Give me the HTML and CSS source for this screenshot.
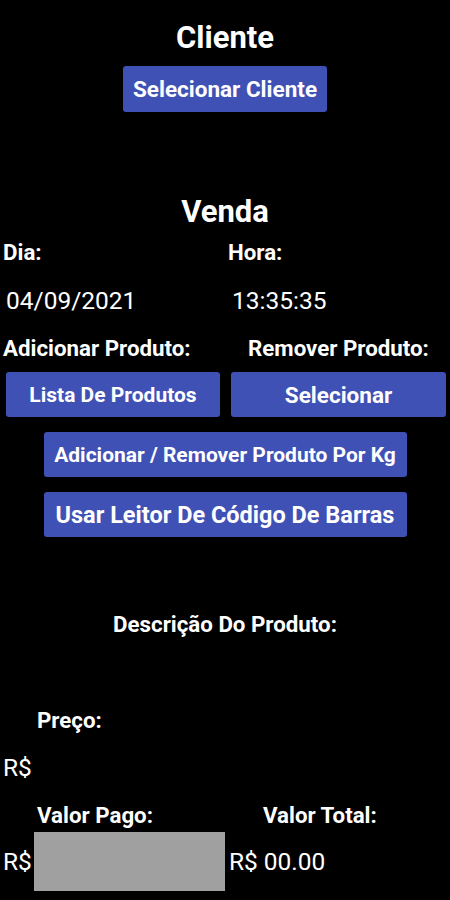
FILE: index.html
```html
<!DOCTYPE html>
<html lang="pt-BR">
<head>
  <meta charset="UTF-8" />
  <meta name="viewport" content="width=device-width, initial-scale=1" />
  <title>Venda</title>
  <link rel="stylesheet" href="styles.css">
</head>
<body>

  <section class="cliente">
    <h1 class="titulo">Cliente</h1>
    <button class="btn btn-cliente">Selecionar Cliente</button>
  </section>

  <section class="venda">
    <h1 class="titulo">Venda</h1>

    <div class="linha linha-data">
      <span class="rotulo">Dia:</span>
      <span class="rotulo">Hora:</span>
    </div>
    <div class="linha linha-valor">
      <span class="valor">04/09/2021</span>
      <span class="valor">13:35:35</span>
    </div>

    <div class="linha linha-produto">
      <span class="rotulo">Adicionar Produto:</span>
      <span class="rotulo">Remover Produto:</span>
    </div>
    <div class="botoes-produto">
      <button class="btn btn-lista">Lista De Produtos</button>
      <button class="btn btn-selecionar">Selecionar</button>
    </div>

    <button class="btn btn-largo">Adicionar / Remover Produto Por Kg</button>
    <button class="btn btn-largo btn-leitor">Usar Leitor De Código De Barras</button>

    <p class="rotulo descricao">Descrição Do Produto:</p>

    <p class="rotulo preco">Preço:</p>
    <p class="valor preco-valor">R$</p>

    <div class="linha linha-pago">
      <span class="rotulo">Valor Pago:</span>
      <span class="rotulo">Valor Total:</span>
    </div>
    <div class="pagamento">
      <span class="valor">R$</span>
      <input type="text" class="campo-pago" />
      <span class="valor">R$ 00.00</span>
    </div>
  </section>

</body>
</html>
```

FILE: styles.css
```css
body {
  margin: 0;
  background: #000;
  color: #fff;
  font-family: Roboto, "Liberation Sans", sans-serif;
  width: 450px;
  height: 900px;
  overflow: hidden;
}
.cliente {
  display: flex;
  flex-direction: column;
  align-items: center;
  padding-top: 20px;
}
.titulo {
  margin: 0;
  font-size: 31px;
  line-height: 36px;
  font-weight: 700;
  text-align: center;
}
.btn {
  background-color: #3f51b5;
  color: #fff;
  border: none;
  border-radius: 3px;
  font-family: inherit;
  font-size: 21px;
  font-weight: 700;
  height: 45px;
  padding: 0;
  cursor: pointer;
}
.btn-cliente {
  margin-top: 10px;
  width: 204px;
  height: 46px;
  font-size: 22.5px;
}
.btn-selecionar {
  font-size: 22.5px;
}
.btn-leitor {
  font-size: 23.5px;
}
.venda {
  margin-top: 82px;
}
.rotulo {
  font-size: 22.3px;
  font-weight: 700;
  line-height: 26px;
  margin: 0;
}
.valor {
  font-size: 24.5px;
  line-height: 30px;
  margin: 0;
}
.linha {
  display: grid;
  grid-template-columns: 225px 1fr;
  padding-left: 3px;
}
.linha-data {
  margin-top: 9px;
}
.linha-valor {
  margin-top: 21px;
  padding-left: 6px;
  grid-template-columns: 226px 1fr;
}
.linha-produto {
  margin-top: 19px;
  grid-template-columns: 245px 1fr;
}
.botoes-produto {
  display: grid;
  grid-template-columns: 214px 215px;
  gap: 11px;
  padding-left: 6px;
  margin-top: 11px;
}
.btn-largo {
  display: block;
  width: 363px;
  margin: 15px auto 0;
}
.descricao {
  text-align: center;
  margin-top: 74px;
}
.preco {
  margin-top: 70px;
  padding-left: 37px;
}
.preco-valor {
  margin-top: 20px;
  padding-left: 3px;
}
.linha-pago {
  margin-top: 19px;
  padding-left: 37px;
  grid-template-columns: 226px 1fr;
}
.pagamento {
  display: flex;
  align-items: center;
  padding-left: 3px;
  margin-top: 4px;
}
.campo-pago {
  width: 191px;
  height: 59px;
  margin: 0 4px 0 2px;
  padding: 0;
  border: none;
  background: #a0a0a0;
}
```
